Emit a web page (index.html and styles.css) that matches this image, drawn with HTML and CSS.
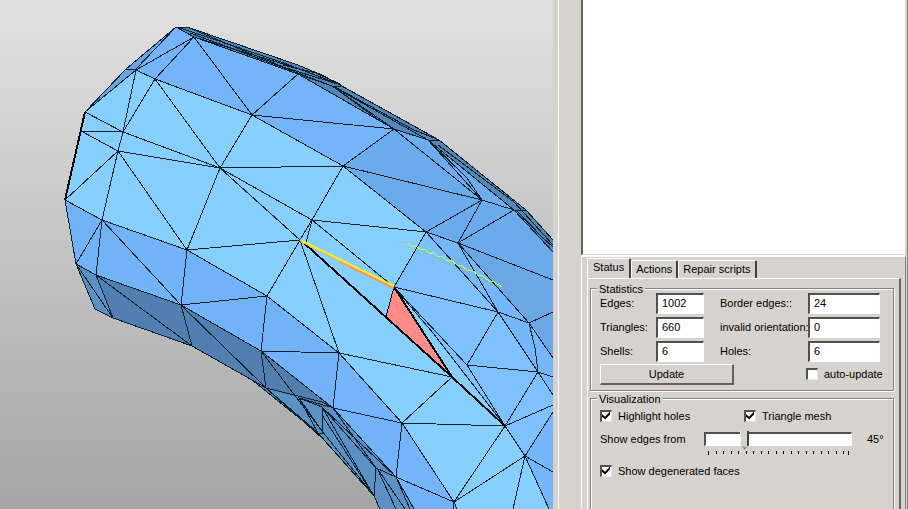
FILE: index.html
```html
<!DOCTYPE html>
<html lang="en">
<head>
<meta charset="utf-8">
<title>Mesh repair</title>
<link rel="stylesheet" href="styles.css">
</head>
<body>
<main class="viewport">
<svg class="mesh" viewBox="0 0 553 509" preserveAspectRatio="xMaxYMin slice" role="img" aria-label="Triangle mesh">
  <path fill="#87cfff" d="M176 27L187 27L298 65L322 75L439 140L526 210L553 240V509H380L374 496L318 433L252 380L192 346L113 318L95 309L76 264L65 200L85 112L126 69Z"/>
  <!-- upper bands -->
  <path fill="#75b4f9" d="M176 27L194 37L298 74L394 129L343 166L252 115L155 79L136 70L85 112L126 69Z"/>
  <path fill="#6eafef" d="M298 74L394 129L428 140L514 210L553 250V280L458 243L426 232L343 166L394 129Z"/>
  <path fill="#6babec" d="M343 166L394 129L482 200L514 210L553 252V321L529 323L458 243L426 232Z"/>
  <path fill="#6aa5df" d="M85 112L126 69L176 27L136 70Z"/>
  <path fill="#7dc2ff" d="M426 232L458 243L529 323L498 312L394 287ZM394 287L498 312L538 372L553 395V405L505 426ZM505 426L553 405V509H549L525 456Z"/>
  <path fill="#74b7fb" d="M426 232L458 243L498 312ZM458 243L529 323L498 312ZM498 312L529 323L553 358V395L538 372ZM525 456L553 412V509H549Z"/>
  <path fill="#6ba7e5" d="M458 243L553 280V312L529 323ZM529 323L553 312V358Z"/>
  <path fill="#5487b4" d="M176 27L187 27L298 65L322 75L439 140L526 210L553 240V252L514 210L482 200L412 140L394 129L298 74L194 37Z"/>
  <path fill="#6daced" d="M394 129L428 140L514 210L482 200Z"/>
  <!-- lower bands -->
  <path fill="#72b3f7" d="M65 200L102 220L187 250L267 296L339 353L402 423L454 502L457 509H400L333 408L261 351L181 305L96 275L76 264Z"/>
  <path fill="#5180b0" d="M76 264L96 275L181 305L261 351L333 408L396 477L415 509H380L374 496L318 433L252 380L192 346L113 318L95 309Z"/>
  <path fill="#5b91c4" d="M76 264L96 275L113 318L95 309ZM266 388L299 398L322 407L376 468L374 496L318 433ZM333 408L396 477L415 509H395L377 468L322 407ZM377 468L395 509H380L374 496Z"/>
  <path fill="#75b5fb" d="M402 423L454 502L396 477ZM339 353L402 423L333 408Z"/>
  <!-- wireframe -->
  <g class="wire">
    <path d="M176 27H187L298 65L322 75L439 140L526 210L553 240M176 27L126 69L85 112L81 131L65 200L76 264L95 309L113 318L192 346L252 380L318 433L374 496L380 509"/>
    <path d="M176 27L194 37L298 74L394 129L482 200L514 210L526 210M187 27L283 67L341 85M180 28L284 63L341 85M190 33L290 70L332 86M194 37L300 69L341 85M283 65L316 73L340 84M332 86H341M332 86L394 129L428 140H439M298 74L332 86L428 140M333 86L414 130L439 140M335 88L380 121L394 129M428 140L482 200M428 140L467 178L482 200M428 140L514 210M438 145L514 202L553 245M514 210L553 252M516 210L543 238L553 247"/>
    <path d="M126 69H136L176 27M136 70L194 37M136 70L155 79L194 37L252 115M136 70L85 112M136 70L123 132L118 151L65 200M155 79L123 132M155 79L220 168M155 79L252 115L298 74M252 115L394 129M252 115L343 166L394 129M252 115L220 168L343 166M85 112L123 132L220 168M81 131L123 132M81 131L118 151L220 168M118 151L102 220M118 151L187 250L220 168"/>
    <path d="M65 200L102 220L187 250L267 296L339 353L402 423L454 502L457 509M102 220L76 264L96 275L102 220L181 305L187 250L300 240L267 296L261 351M76 264L113 318L96 275L181 305L192 346L96 275M181 305L267 296M181 305L266 388M181 305L261 351L333 408L396 477L414 509M261 351L339 353L333 408L402 423M396 477L402 423M396 477L454 502L453 509M261 351L266 388L322 402L333 408"/>
    <path d="M220 168L312 220L300 240L220 168M343 166L312 220L306 243M312 220L426 232L482 200M312 220L394 287L426 232L343 166L482 200L458 243L514 210M426 232L458 243L553 280M426 232L498 312L458 243L529 323L553 312M394 287L498 312L529 323L535 348L538 372L498 312L467 365L538 372L553 377M394 287L467 365L505 426M394 287L433 333L505 426M529 323L553 358M538 372L553 395M538 372L505 426L553 405M394 287L386 317M300 240L339 353L452 377L402 423L505 426L525 456L553 412M505 426L454 502L525 456L553 472M525 456L549 509M525 456L513 509"/>
    <path d="M192 346L252 380L266 388L322 438M261 351L322 431L374 496M266 388L316 431L374 496M299 398L318 433H322V407L299 398L322 431M299 398L330 407M322 407L376 468L374 496M322 407L374 496M322 407L396 477M322 415L374 496M333 408L376 468L396 477L410 509M377 468L396 509M377 468L405 509M252 380L308 425"/>
  </g>
  <path class="hole" d="M394 287L386 317L452 377Z"/>
  <path class="bold" d="M304 243L452 377L394 287M452 377L505 426M85 112L65 200"/>
  <path stroke="#ff8b68" stroke-width="2" d="M340 262L394 288"/>
  <path stroke="#ffb04a" stroke-width="1" d="M302 242L350 267"/>
  <path stroke="#f8ef1c" stroke-width="2" d="M300 240L394 286"/>
  <path class="yellow" d="M408 243l4 4l4-1l5 4l4-1l5 5l3-2l5 5l4-1l5 5l4-1l6 5l4 0l6 5l5 0l6 5l5 1l6 5l5 1l8 5"/>
</svg>
</main>
<aside class="side">
  <div class="list"></div>
  <section class="panel">
    <nav class="tabs" role="tablist">
      <button class="tab active" role="tab" aria-selected="true">Status</button>
      <button class="tab" role="tab">Actions</button>
      <button class="tab" role="tab">Repair scripts</button>
    </nav>
    <form class="page">
      <fieldset class="group">
        <legend>Statistics</legend>
        <div class="stats">
          <label for="edges">Edges:</label><input class="field" id="edges" value="1002">
          <label for="border">Border edges::</label><input class="field" id="border" value="24">
          <label for="triangles">Triangles:</label><input class="field" id="triangles" value="660">
          <label for="invalid">invalid orientation:</label><input class="field" id="invalid" value="0">
          <label for="shells">Shells:</label><input class="field" id="shells" value="6">
          <label for="holes">Holes:</label><input class="field" id="holes" value="6">
        </div>
        <div class="actions">
          <button class="update" type="button">Update</button>
          <label class="check"><input type="checkbox">auto-update</label>
        </div>
      </fieldset>
      <fieldset class="group visual">
        <legend>Visualization</legend>
        <div class="checks">
          <label class="check"><input type="checkbox" checked>Highlight holes</label>
          <label class="check"><input type="checkbox" checked>Triangle mesh</label>
        </div>
        <div class="angle">
          <label for="angle">Show edges from</label>
          <div class="slider">
            <input id="angle" type="range" min="0" max="180" value="45">
            <svg class="ticks" viewBox="0 0 148 4" aria-hidden="true"><path d="M4.5 0v4M12.5 0v3M19.5 0v3M27.5 0v3M34.5 0v3M42.5 0v3M49.5 0v3M57.5 0v3M64.5 0v3M72.5 0v3M79.5 0v3M87.5 0v3M94.5 0v3M102.5 0v3M109.5 0v3M117.5 0v3M124.5 0v3M132.5 0v3M139.5 0v3M144.5 0v4"/></svg>
          </div>
          <output for="angle">45°</output>
        </div>
        <label class="check"><input type="checkbox" checked>Show degenerated faces</label>
      </fieldset>
    </form>
  </section>
</aside>
</body>
</html>
```
FILE: styles.css
```css
* { box-sizing: border-box; }
body {
  margin: 0;
  display: flex;
  height: 100vh;
  overflow: hidden;
  background: #d6d3ce;
  color: #000;
  font: 11px/14px "Liberation Sans", Arial, sans-serif;
}
button, input { font: inherit; color: inherit; margin: 0; }
.viewport {
  flex: 1;
  min-width: 0;
  background: linear-gradient(#e1e1e1, #a5a5a5);
}
.mesh { display: block; width: 100%; height: 100%; fill: none; }
.wire, .bold, .yellow { fill: none; stroke: #08202e; shape-rendering: crispEdges; }
.bold { stroke: #000; stroke-width: 2; }
.yellow { stroke: #c4ff42; }
.hole { fill: #ff8b8b; stroke: #000; shape-rendering: crispEdges; }

.side {
  width: 355px;
  display: flex;
  flex-direction: column;
  padding: 0 1px 0 28px;
  background: linear-gradient(#fff, #fff) 5px 0 / 1px 100% no-repeat #d6d3ce;
  border-right: 1px solid #848284;
}
.list {
  flex: none;
  height: 50vh;
  background: #fff;
  border: 1px solid #d6d3ce;
  border-top: 0;
  border-left: 2px solid #636163;
}
.panel {
  flex: 1;
  min-height: 0;
  display: flex;
  flex-direction: column;
  border: 1px solid #fff;
  border-top-width: 2px;
  border-right-color: #848284;
  border-bottom: 0;
  padding: 1px 4px 0 5px;
}
.tabs { display: flex; align-items: flex-end; height: 20px; flex: none; }
.tab {
  height: 18px;
  padding: 0 4px;
  background: #d6d3ce;
  border: 1px solid #fff;
  border-right: 2px solid #424142;
  border-bottom: 0;
  border-radius: 2px 2px 0 0;
}
.tab.active { height: 20px; padding: 0 5px 2px; }
.page {
  flex: 1;
  display: flex;
  flex-direction: column;
  gap: 2px;
  padding: 4px 5px 0 2px;
  border-left: 1px solid #fff;
  border-top: 1px solid #fff;
  border-right: 2px solid #636163;
}
.group {
  min-width: 0;
  margin: 0;
  padding: 0 9px 5px;
  border: 1px solid #848284;
  box-shadow: inset 1px 1px #fff, 1px 1px #fff;
}
.visual { flex: 1; border-bottom: 0; }
legend { height: 12px; line-height: 12px; padding: 0 2px; margin-left: -3px; background: #d6d3ce; }
.stats {
  display: grid;
  grid-template-columns: 56px 48px 104px 72px;
  row-gap: 3px;
  align-items: center;
  margin-top: -2px;
}
.stats label:nth-of-type(even) { margin-left: 16px; white-space: nowrap; }
.field {
  width: 100%;
  height: 21px;
  padding: 0 4px 2px;
  background: #fff;
  border: 2px solid #525152;
  border-right: 1px solid #fff;
  border-bottom: 1px solid #fff;
  border-radius: 0;
  outline: 0;
}
.actions { display: flex; align-items: center; gap: 72px; margin-top: 2px; }
.update {
  width: 134px;
  height: 21px;
  padding: 0;
  background: #d6d3ce;
  border: 1px solid #fff;
  border-right: 2px solid #636163;
  border-bottom: 2px solid #636163;
}
.check { display: flex; align-items: center; gap: 6px; }
.check input {
  appearance: none;
  width: 12px;
  height: 12px;
  background: #fff;
  border: 2px solid #525152;
  border-right: 1px solid #e7e7e7;
  border-bottom: 1px solid #e7e7e7;
}
.check input:checked::before {
  content: "";
  display: block;
  width: 8px;
  height: 8px;
  background: #000;
  clip-path: polygon(0 30%, 38% 65%, 100% 0, 100% 38%, 38% 100%, 0 65%);
}
.checks { display: grid; grid-template-columns: 144px 1fr; margin-top: 4px; }
.angle { display: grid; grid-template-columns: 104px 148px 1fr; margin: 6px 0 8px; }
.angle > label { padding-top: 3px; }
.angle output { padding: 3px 0 0 15px; }
.slider { height: 27px; }
.slider input { appearance: none; display: block; width: 100%; height: 20px; background: none; }
.slider input::-webkit-slider-runnable-track {
  height: 14px;
  background: #fff;
  border: 2px solid #525152;
  border-right: 1px solid #fff;
  border-bottom: 1px solid #fff;
}
.slider input::-webkit-slider-thumb {
  appearance: none;
  width: 9px;
  height: 19px;
  margin-top: -3px;
  border-radius: 0;
  background:
    linear-gradient(90deg, #f4f3f1 1px, #d6d3ce 1px 7px, #424142 7px) 0 0 / 100% 15px no-repeat,
    linear-gradient(#d6d3ce, #424142) 0 15px / 100% 4px no-repeat;
  clip-path: polygon(0 0, 100% 0, 100% 78%, 50% 100%, 0 78%);
}
.ticks { display: block; width: 100%; height: 4px; margin-top: 2px; stroke: #000; fill: none; }
```
